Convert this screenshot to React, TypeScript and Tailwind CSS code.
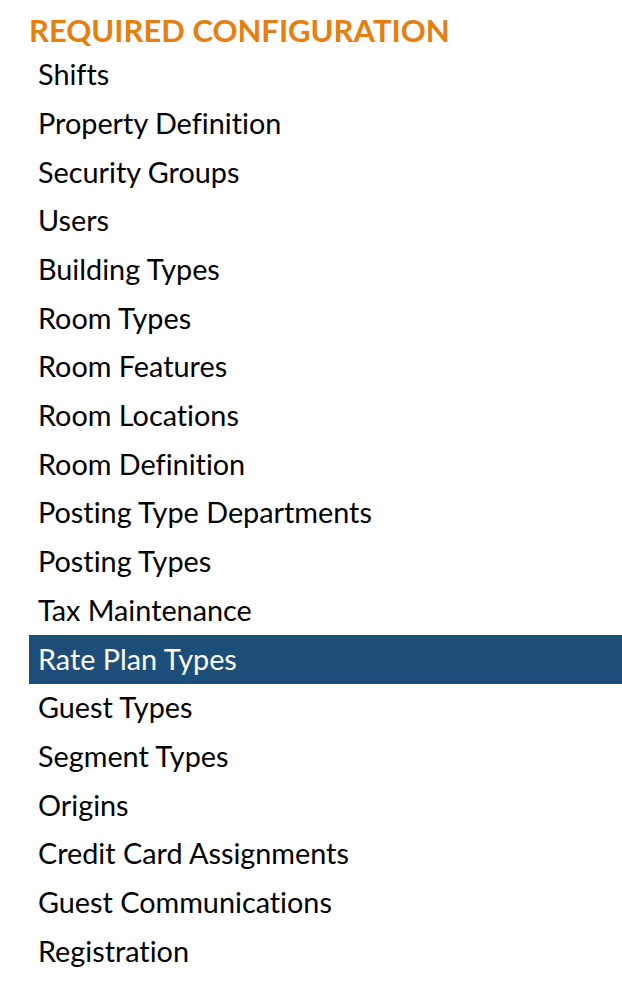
const items = [
  "Shifts",
  "Property Definition",
  "Security Groups",
  "Users",
  "Building Types",
  "Room Types",
  "Room Features",
  "Room Locations",
  "Room Definition",
  "Posting Type Departments",
  "Posting Types",
  "Tax Maintenance",
  "Rate Plan Types",
  "Guest Types",
  "Segment Types",
  "Origins",
  "Credit Card Assignments",
  "Guest Communications",
  "Registration",
];

export default function App() {
  return (
    <div className="w-[622px] h-[990px] bg-white pl-[29px] font-['Lato','Liberation_Sans',sans-serif] [font-variant-ligatures:none]">
      <h2 className="h-[51px] pt-[8px] text-[31px] leading-[44px] font-bold text-[#e67e10] uppercase">
        Required Configuration
      </h2>
      <ul>
        {items.map((item) => (
          <li
            key={item}
            className={
              item === "Rate Plan Types"
                ? "h-[48.7px] flex items-center pl-[9px] pb-[1px] text-[28.8px] bg-[#1d4e79] text-white"
                : "h-[48.7px] flex items-center pl-[9px] pb-[1px] text-[28.8px] text-black"
            }
          >
            {item}
          </li>
        ))}
      </ul>
    </div>
  );
}
